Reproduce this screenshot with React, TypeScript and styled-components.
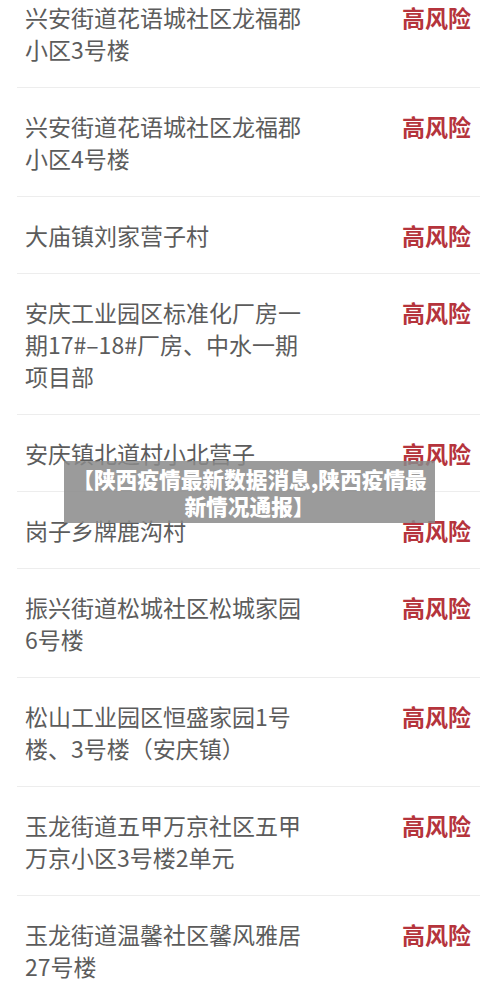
import React from "react";
import styled, { createGlobalStyle } from "styled-components";

const Global = createGlobalStyle`
  html, body { margin: 0; padding: 0; background: #ffffff; }
  body { font-family: "Noto Sans CJK SC", "Noto Sans", sans-serif; overflow: hidden; }
`;

const Page = styled.div`
  position: relative;
  width: 500px;
  height: 983px;
  overflow: hidden;
  background: #ffffff;
`;

const List = styled.ul`
  list-style: none;
  margin: -21px 20px 0 17px;
  padding: 0;
`;

const Row = styled.li`
  display: flex;
  justify-content: space-between;
  align-items: flex-start;
  padding: 22px 9px 22px 8px;
  border-bottom: 1px solid #ededed;
`;

const Name = styled.div`
  font-size: 23px;
  line-height: 32px;
  color: #5c5c5c;
  white-space: nowrap;
`;

const Risk = styled.div`
  font-size: 23px;
  line-height: 32px;
  font-weight: 700;
  color: #b5343c;
  white-space: nowrap;
`;

const Caption = styled.div`
  position: absolute;
  left: 64px;
  top: 461px;
  width: 371px;
  height: 62px;
  box-sizing: border-box;
  padding-top: 4px;
  background: rgba(138, 138, 138, 0.85);
  color: #ffffff;
  font-size: 21.7px;
  line-height: 27px;
  font-weight: 900;
  text-align: center;
  white-space: nowrap;
`;

const rows: string[][] = [
  ["兴安街道花语城社区龙福郡", "小区3号楼"],
  ["兴安街道花语城社区龙福郡", "小区4号楼"],
  ["大庙镇刘家营子村"],
  ["安庆工业园区标准化厂房一", "期17#–18#厂房、中水一期", "项目部"],
  ["安庆镇北道村小北营子"],
  ["岗子乡牌鹿沟村"],
  ["振兴街道松城社区松城家园", "6号楼"],
  ["松山工业园区恒盛家园1号", "楼、3号楼（安庆镇）"],
  ["玉龙街道五甲万京社区五甲", "万京小区3号楼2单元"],
  ["玉龙街道温馨社区馨风雅居", "27号楼"],
];

export default function App() {
  return (
    <Page>
      <Global />
      <List>
        {rows.map((lines, i) => (
          <Row key={i}>
            <Name>
              {lines.map((l, j) => (
                <div key={j}>{l}</div>
              ))}
            </Name>
            <Risk>高风险</Risk>
          </Row>
        ))}
      </List>
      <Caption>
        【陕西疫情最新数据消息,陕西疫情最
        <br />
        新情况通报】
      </Caption>
    </Page>
  );
}
